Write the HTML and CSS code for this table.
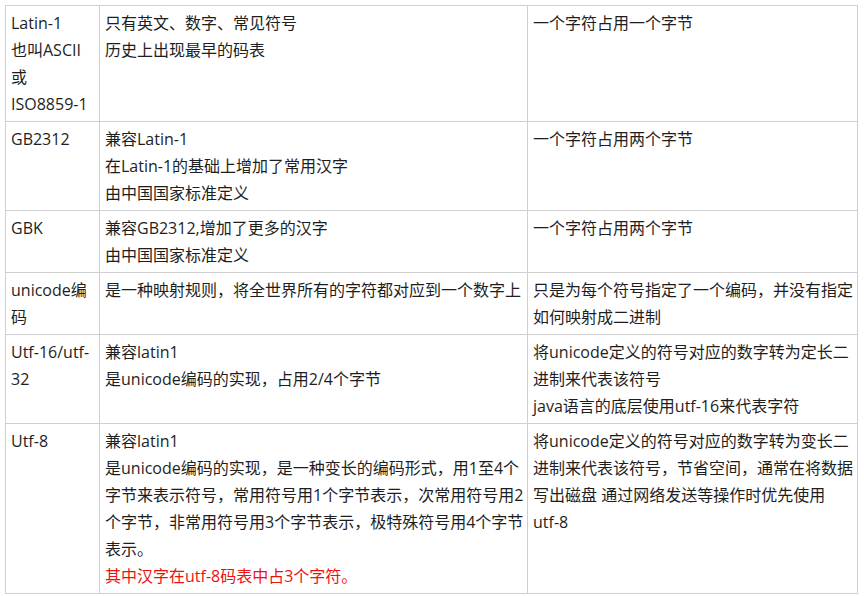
FILE: index.html
```html
<!DOCTYPE html>
<html lang="zh-CN">
<head>
<meta charset="utf-8">
<title>字符编码</title>
<link rel="stylesheet" href="styles.css">
</head>
<body>
<table class="enc">
  <colgroup>
    <col class="c1">
    <col class="c2">
    <col class="c3">
  </colgroup>
  <tbody>
    <tr>
      <td>Latin-1<br>也叫ASCII<br>或<br>ISO8859-1</td>
      <td>只有英文、数字、常见符号<br>历史上出现最早的码表</td>
      <td>一个字符占用一个字节</td>
    </tr>
    <tr>
      <td>GB2312</td>
      <td>兼容Latin-1<br>在Latin-1的基础上增加了常用汉字<br>由中国国家标准定义</td>
      <td>一个字符占用两个字节</td>
    </tr>
    <tr>
      <td>GBK</td>
      <td>兼容GB2312,增加了更多的汉字<br>由中国国家标准定义</td>
      <td>一个字符占用两个字节</td>
    </tr>
    <tr>
      <td>unicode编<br>码</td>
      <td>是一种映射规则，将全世界所有的字符都对应到一个数字上</td>
      <td>只是为每个符号指定了一个编码，并没有指定<br>如何映射成二进制</td>
    </tr>
    <tr>
      <td>Utf-16/utf-<br>32</td>
      <td>兼容latin1<br>是unicode编码的实现，占用2/4个字节</td>
      <td>将unicode定义的符号对应的数字转为定长二<br>进制来代表该符号<br>java语言的底层使用utf-16来代表字符</td>
    </tr>
    <tr>
      <td>Utf-8</td>
      <td>兼容latin1<br>是unicode编码的实现，是一种变长的编码形式，用1至4个<br>字节来表示符号，常用符号用1个字节表示，次常用符号用2<br>个字节，非常用符号用3个字节表示，极特殊符号用4个字节<br>表示。<br><span class="warn">其中汉字在utf-8码表中占3个字符。</span></td>
      <td>将unicode定义的符号对应的数字转为变长二<br>进制来代表该符号，节省空间，通常在将数据<br>写出磁盘 通过网络发送等操作时优先使用<br>utf-8</td>
    </tr>
  </tbody>
</table>
</body>
</html>
```

FILE: styles.css
```css
html, body {
  margin: 0;
  padding: 0;
  background: #ffffff;
}

body {
  padding: 5px 0 0 5px;
  font-family: "Open Sans", "Noto Sans CJK SC", sans-serif;
  font-size: 16px;
  color: #1e1e1e;
}

.enc {
  border-collapse: collapse;
  table-layout: fixed;
  width: 852px;
}

.enc .c1 { width: 94px; }
.enc .c2 { width: 428px; }
.enc .c3 { width: 330px; }

.enc td {
  border: 1px solid #cfcfcf;
  vertical-align: top;
  padding: 4px 3px 3px 5px;
  line-height: 27px;
  white-space: nowrap;
  overflow: visible;
}

.warn {
  color: #ee1111;
}
```
